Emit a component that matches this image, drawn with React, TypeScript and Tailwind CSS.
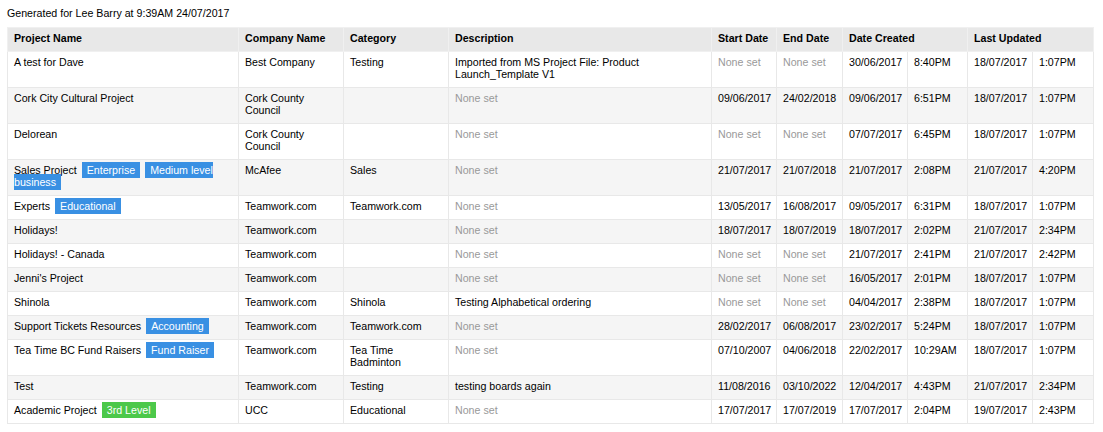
import type { ReactNode } from 'react';

type Tag = { label: string; color: 'blue' | 'green' };

interface Row {
    name: string;
    tags?: Tag[];
    company: string;
    category: string;
    description?: string;
    start?: string;
    end?: string;
    created: [string, string];
    updated: [string, string];
}

const rows: Row[] = [
    { name: 'A test for Dave', company: 'Best Company', category: 'Testing', description: 'Imported from MS Project File: Product Launch_Template V1', created: ['30/06/2017', '8:40PM'], updated: ['18/07/2017', '1:07PM'] },
    { name: 'Cork City Cultural Project', company: 'Cork County Council', category: '', start: '09/06/2017', end: '24/02/2018', created: ['09/06/2017', '6:51PM'], updated: ['18/07/2017', '1:07PM'] },
    { name: 'Delorean', company: 'Cork County Council', category: '', created: ['07/07/2017', '6:45PM'], updated: ['18/07/2017', '1:07PM'] },
    { name: 'Sales Project', tags: [{ label: 'Enterprise', color: 'blue' }, { label: 'Medium level business', color: 'blue' }], company: 'McAfee', category: 'Sales', start: '21/07/2017', end: '21/07/2018', created: ['21/07/2017', '2:08PM'], updated: ['21/07/2017', '4:20PM'] },
    { name: 'Experts', tags: [{ label: 'Educational', color: 'blue' }], company: 'Teamwork.com', category: 'Teamwork.com', start: '13/05/2017', end: '16/08/2017', created: ['09/05/2017', '6:31PM'], updated: ['18/07/2017', '1:07PM'] },
    { name: 'Holidays!', company: 'Teamwork.com', category: '', start: '18/07/2017', end: '18/07/2019', created: ['18/07/2017', '2:02PM'], updated: ['21/07/2017', '2:34PM'] },
    { name: 'Holidays! - Canada', company: 'Teamwork.com', category: '', created: ['21/07/2017', '2:41PM'], updated: ['21/07/2017', '2:42PM'] },
    { name: "Jenni's Project", company: 'Teamwork.com', category: '', created: ['16/05/2017', '2:01PM'], updated: ['18/07/2017', '1:07PM'] },
    { name: 'Shinola', company: 'Teamwork.com', category: 'Shinola', description: 'Testing Alphabetical ordering', created: ['04/04/2017', '2:38PM'], updated: ['18/07/2017', '1:07PM'] },
    { name: 'Support Tickets Resources', tags: [{ label: 'Accounting', color: 'blue' }], company: 'Teamwork.com', category: 'Teamwork.com', start: '28/02/2017', end: '06/08/2017', created: ['23/02/2017', '5:24PM'], updated: ['18/07/2017', '1:07PM'] },
    { name: 'Tea Time BC Fund Raisers', tags: [{ label: 'Fund Raiser', color: 'blue' }], company: 'Teamwork.com', category: 'Tea Time Badminton', start: '07/10/2007', end: '04/06/2018', created: ['22/02/2017', '10:29AM'], updated: ['18/07/2017', '1:07PM'] },
    { name: 'Test', company: 'Teamwork.com', category: 'Testing', description: 'testing boards again', start: '11/08/2016', end: '03/10/2022', created: ['12/04/2017', '4:43PM'], updated: ['21/07/2017', '2:34PM'] },
    { name: 'Academic Project', tags: [{ label: '3rd Level', color: 'green' }], company: 'UCC', category: 'Educational', start: '17/07/2017', end: '17/07/2019', created: ['17/07/2017', '2:04PM'], updated: ['19/07/2017', '2:43PM'] },
];

const cell = 'border border-[#e8e8e8] px-[6px] pt-[4px] pb-[7px] align-top';
const head = 'border border-[#f0f0f0] px-[6px] pt-[4px] pb-[7px] align-top';

function Td({ children }: { children?: ReactNode }) {
    return <td className={cell}>{children}</td>;
}

function OrNone({ value }: { value?: string }) {
    return value ? <>{value}</> : <span className="text-[#999]">None set</span>;
}

function Badge({ tag }: { tag: Tag }) {
    const bg = tag.color === 'green' ? 'bg-[#4cc84a]' : 'bg-[#3990e3]';
    return (
        <span className={`${bg} ml-[2px] px-[5px] py-[2px] text-white [box-decoration-break:slice]`}>{tag.label}</span>
    );
}

export default function App() {
    return (
        <div className="bg-white min-h-screen text-black text-[10.65px] leading-[12px] font-['Liberation_Sans',Arial,sans-serif]">
            <p className="pl-[7px] pt-[7px] pb-[8px]">Generated for Lee Barry at 9:39AM 24/07/2017</p>
            <table className="ml-[7px] w-[1086px] table-fixed border-collapse">
                <colgroup>
                    <col className="w-[231px]" />
                    <col className="w-[105px]" />
                    <col className="w-[105px]" />
                    <col className="w-[263px]" />
                    <col className="w-[65px]" />
                    <col className="w-[66px]" />
                    <col className="w-[65px]" />
                    <col className="w-[60px]" />
                    <col className="w-[65px]" />
                    <col className="w-[61px]" />
                </colgroup>
                <thead>
                    <tr className="bg-[#e8e8e8] font-bold text-left">
                        {['Project Name', 'Company Name', 'Category', 'Description', 'Start Date', 'End Date'].map((h) => (
                            <th key={h} className={head}>{h}</th>
                        ))}
                        <th colSpan={2} className={head}>Date Created</th>
                        <th colSpan={2} className={head}>Last Updated</th>
                    </tr>
                </thead>
                <tbody>
                    {rows.map((r, i) => (
                        <tr key={r.name} className={i % 2 === 1 ? 'bg-[#f5f5f5]' : 'bg-white'}>
                            <Td>
                                {r.name}
                                {r.tags?.map((t) => (
                                    <span key={t.label}>{' '}<Badge tag={t} /></span>
                                ))}
                            </Td>
                            <Td>{r.company}</Td>
                            <Td>{r.category}</Td>
                            <Td><OrNone value={r.description} /></Td>
                            <Td><OrNone value={r.start} /></Td>
                            <Td><OrNone value={r.end} /></Td>
                            <Td>{r.created[0]}</Td>
                            <Td>{r.created[1]}</Td>
                            <Td>{r.updated[0]}</Td>
                            <Td>{r.updated[1]}</Td>
                        </tr>
                    ))}
                </tbody>
            </table>
        </div>
    );
}
